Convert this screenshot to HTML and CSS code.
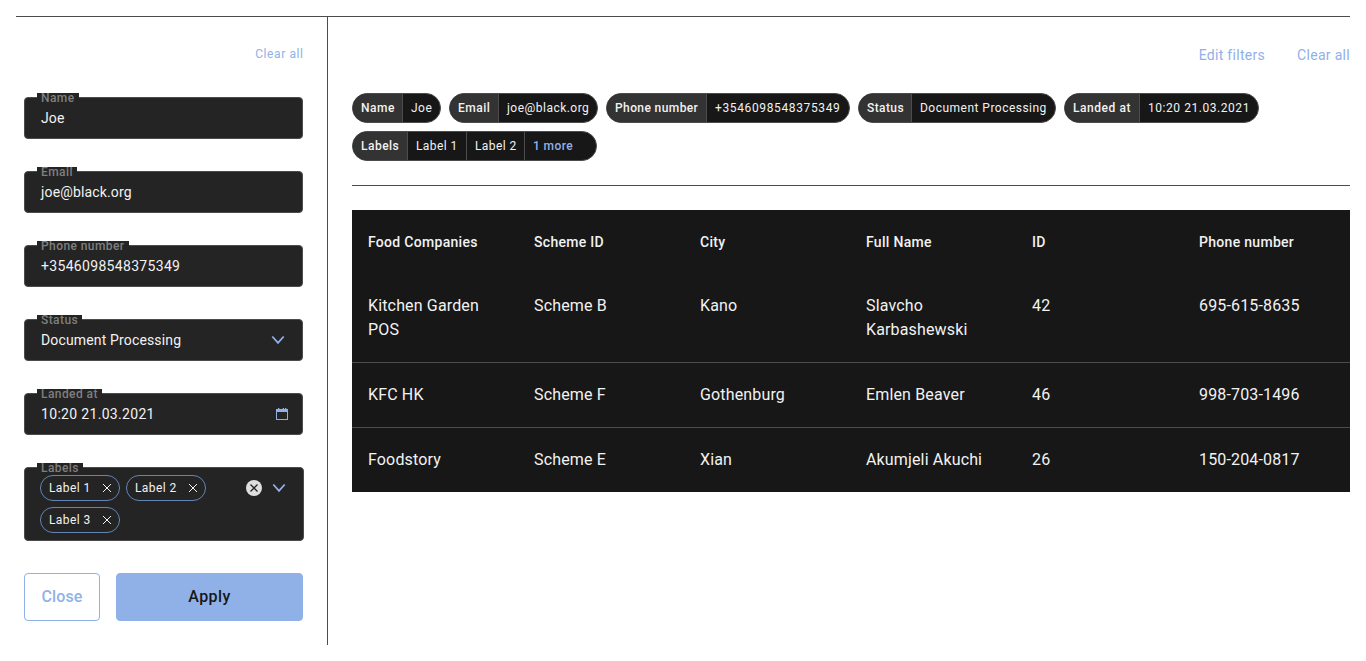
FILE: index.html
```html
<!DOCTYPE html>
<html lang="en">
<head>
<meta charset="utf-8">
<title>Filters</title>
<link rel="stylesheet" href="styles.css">
</head>
<body>
<div class="layout">
  <aside class="sidebar">
    <div class="sidebar-top"><a class="link link-small">Clear all</a></div>
    <form class="fields">
      <div class="field"><span class="field-label">Name</span><span class="value">Joe</span></div>
      <div class="field"><span class="field-label">Email</span><span class="value">joe@black.org</span></div>
      <div class="field"><span class="field-label">Phone number</span><span class="value number">+3546098548375349</span></div>
      <div class="field"><span class="field-label">Status</span><span class="value">Document Processing</span>
        <svg class="chevron" width="14" height="10" viewBox="0 0 14 10"><path d="M1.3 1.5 L7 7.9 L12.7 1.5"/></svg></div>
      <div class="field"><span class="field-label">Landed at</span><span class="value number">10:20 21.03.2021</span>
        <svg class="calendar" width="12" height="12" viewBox="0 0 12 12"><path d="M0 1h2V0h1.3v1h3.4V0H8v1h1V0h1.3v1H12v11H0zM1 4v7h10V4z" fill-rule="evenodd"/></svg></div>
      <div class="field field-tags"><span class="field-label">Labels</span>
        <div class="tags">
          <span class="tag">Label 1<svg width="10" height="10" viewBox="0 0 10 10"><path d="M1 1l8 8M9 1l-8 8"/></svg></span>
          <span class="tag">Label 2<svg width="10" height="10" viewBox="0 0 10 10"><path d="M1 1l8 8M9 1l-8 8"/></svg></span>
          <span class="tag">Label 3<svg width="10" height="10" viewBox="0 0 10 10"><path d="M1 1l8 8M9 1l-8 8"/></svg></span>
        </div>
        <div class="controls">
          <svg class="clear" width="16" height="16" viewBox="0 0 16 16"><circle cx="8" cy="8" r="8"/><path d="M4.5 4.5l7 7M11.5 4.5l-7 7"/></svg>
          <svg class="chevron" width="14" height="10" viewBox="0 0 14 10"><path d="M1.3 1.5 L7 7.9 L12.7 1.5"/></svg>
        </div>
      </div>
      <div class="buttons"><button type="button" class="btn btn-close">Close</button><button type="button" class="btn btn-apply">Apply</button></div>
    </form>
  </aside>
  <main class="main">
    <div class="actions"><a class="link">Edit filters</a><a class="link">Clear all</a></div>
    <div class="chips">
      <div class="chip chip-name"><b>Name</b><span>Joe</span></div>
      <div class="chip chip-email"><b>Email</b><span>joe@black.org</span></div>
      <div class="chip chip-phone"><b>Phone number</b><span>+3546098548375349</span></div>
      <div class="chip chip-status"><b>Status</b><span>Document Processing</span></div>
      <div class="chip chip-landed"><b>Landed at</b><span>10:20 21.03.2021</span></div>
      <div class="chip chip-labels"><b>Labels</b><span>Label 1</span><span>Label 2</span><span class="more">1 more</span></div>
    </div>
    <table class="table">
      <colgroup><col class="narrow"><col class="narrow"><col class="narrow"><col class="narrow"><col class="wide"><col class="wide"></colgroup>
      <thead><tr><th>Food Companies</th><th>Scheme ID</th><th>City</th><th>Full Name</th><th>ID</th><th>Phone number</th></tr></thead>
      <tbody>
        <tr><td>Kitchen Garden POS</td><td>Scheme B</td><td>Kano</td><td>Slavcho Karbashewski</td><td>42</td><td>695-615-8635</td></tr>
        <tr><td>KFC HK</td><td>Scheme F</td><td>Gothenburg</td><td>Emlen Beaver</td><td>46</td><td>998-703-1496</td></tr>
        <tr><td>Foodstory</td><td>Scheme E</td><td>Xian</td><td>Akumjeli Akuchi</td><td>26</td><td>150-204-0817</td></tr>
      </tbody>
    </table>
  </main>
</div>
</body>
</html>
```
FILE: styles.css
```css
* { box-sizing: border-box; }
body { margin: 16px; background: #fff; font-family: Roboto, sans-serif; font-size: 14px; letter-spacing: 0.3px; color: #f2f2f2; }
.layout { display: flex; height: 629px; border-top: 1px solid #4c4c4c; }
.sidebar { width: 312px; flex: none; padding: 24px 24px 0 8px; border-right: 1px solid #4c4c4c; }
.sidebar-top { display: flex; justify-content: flex-end; height: 56px; line-height: 26px; }
.link { color: #90b1e8; }
.link-small { font-size: 12px; letter-spacing: 0.6px; margin-right: -0.6px; }
.fields { display: flex; flex-direction: column; gap: 32px; }
.field { position: relative; display: flex; align-items: center; justify-content: space-between; height: 42px; padding: 0 17px 0 16px; background: #242424; border: 1px solid #4c4c4c; border-radius: 4px; }
.value { letter-spacing: 0.15px; }
.value.number { letter-spacing: 0.32px; }
.field-label { position: absolute; top: -5px; left: 12px; height: 10px; line-height: 10px; padding: 0 4px; overflow: hidden; background: #242424; color: #7f7f7f; font-size: 12px; font-weight: 500; letter-spacing: 0.42px; white-space: nowrap; }
.chevron { fill: none; stroke: #90b1e8; stroke-width: 1.8; }
.calendar { fill: #90b1e8; margin-right: -3px; }
.field-tags { width: 280px; height: 74px; align-items: flex-start; padding: 7px 17px 0 15px; }
.tags { display: flex; flex-wrap: wrap; gap: 6px; width: 180px; }
.tag { display: flex; align-items: center; justify-content: space-between; width: 80px; height: 26px; padding: 0 7px 0 8px; border: 1.5px solid #6484b5; border-radius: 13px; font-size: 12px; letter-spacing: 0.4px; }
.tag svg { fill: none; stroke: #f2f2f2; stroke-width: 1; }
.controls { display: flex; align-items: center; gap: 10px; height: 26px; }
.clear circle { fill: #dedede; }
.clear path { stroke: #242424; stroke-width: 1.3; }
.buttons { display: flex; gap: 16px; }
.btn { height: 48px; border: 1px solid #90b1e8; border-radius: 4px; font: 500 16px Roboto, sans-serif; letter-spacing: 0.15px; padding: 0 0 2px; }
.btn-close { width: 76px; background: #fff; color: #90b1e8; }
.btn-apply { flex: 1; background: #90b1e8; color: #171717; letter-spacing: 0.4px; }
.main { flex: 1; padding: 24px 0 0 24px; }
.actions { display: flex; justify-content: flex-end; gap: 32px; height: 52px; line-height: 28px; }
.chips { display: flex; flex-wrap: wrap; gap: 8px; padding-bottom: 24px; border-bottom: 1px solid #4c4c4c; margin-bottom: 24px; }
.chip { display: grid; height: 30px; line-height: 28px; border: 1px solid #4c4c4c; border-radius: 15px; overflow: hidden; background: #171717; font-size: 12px; letter-spacing: 0.48px; white-space: nowrap; }
.chip b { padding-left: 8px; background: #333; font-weight: 500; }
.chip span { padding-left: 8px; border-left: 1px solid #4c4c4c; }
.chip .more { color: #90b1e8; font-weight: 500; }
.chip-name { grid-template-columns: 49px 38px; }
.chip-email { grid-template-columns: 48px 99px; }
.chip-phone { grid-template-columns: 99px 143px; }
.chip-phone b { letter-spacing: 0.4px; }
.chip-phone span { letter-spacing: 0.63px; }
.chip-status { grid-template-columns: 52px 144px; }
.chip-status b { letter-spacing: 0.4px; }
.chip-landed { grid-template-columns: 74px 119px; }
.chip-landed b, .chip-landed span { letter-spacing: 0.55px; }
.chip-labels { grid-template-columns: 54px 59px 58px 72px; }
.chip-labels span { letter-spacing: 0.4px; }
.table { width: 100%; table-layout: fixed; border-collapse: separate; border-spacing: 0; background: #171717; }
.narrow { width: 166px; }
.wide { width: 167px; }
.table th { height: 64px; padding: 0 16px; text-align: left; font-size: 14px; font-weight: 500; }
.table td { padding: 20px 16px; font-size: 16px; line-height: 24px; letter-spacing: 0.15px; vertical-align: top; }
.table tr + tr td { border-top: 1px solid #4c4c4c; }
```
